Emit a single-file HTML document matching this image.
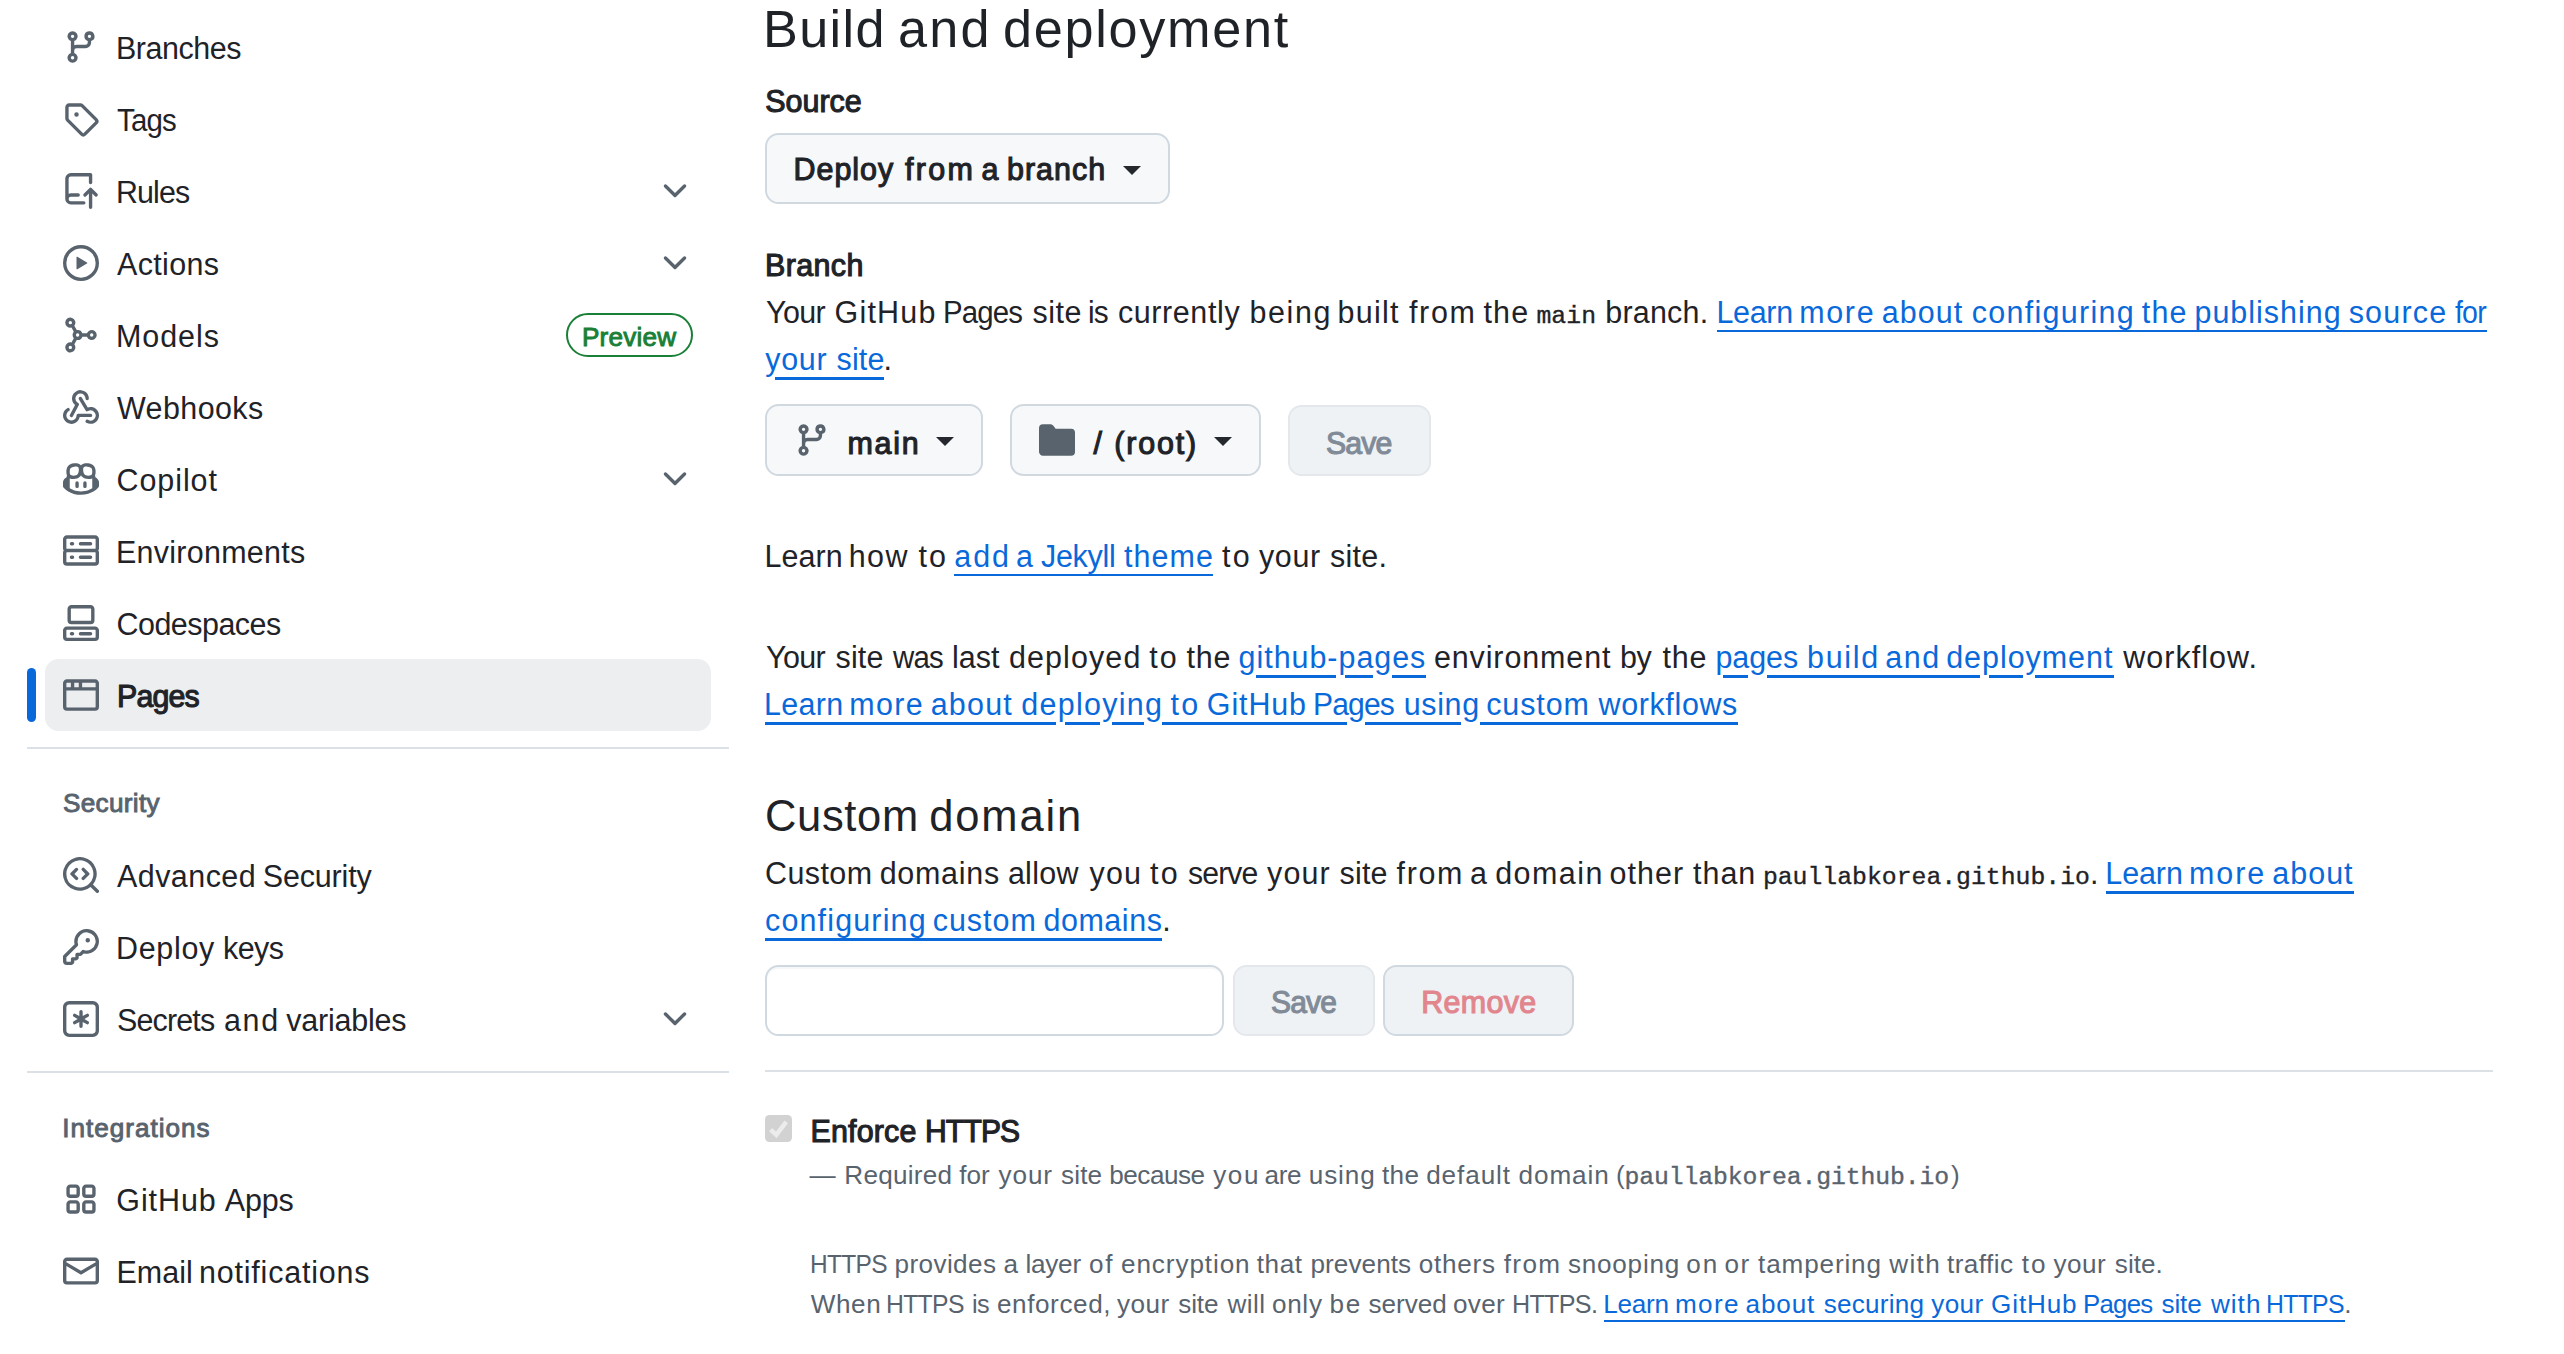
<!DOCTYPE html>
<html lang="en"><head><meta charset="utf-8"><title>GitHub Pages settings</title>
<style>
html,body{margin:0;padding:0;background:#fff}
body{width:2564px;height:1354px;position:relative;overflow:hidden;font-family:"Liberation Sans",sans-serif;color:#1f2328}
.a{position:absolute;display:block}
.t{position:absolute;white-space:pre;line-height:1;transform-origin:0 0;font-family:"Liberation Sans",sans-serif;color:#1f2328}
.m{font-family:"Liberation Mono",monospace}
</style></head><body>
<div class="a" style="left:45px;top:659px;width:666px;height:72px;background:#eceef0;border-radius:13.5px"></div>
<div class="a" style="left:27px;top:668px;width:9px;height:54px;background:#0969da;border-radius:4.5px"></div>
<svg class="a" style="left:63px;top:29px" width="36" height="36" viewBox="0 0 16 16" fill="#59636e"><path d="M9.5 3.25a2.25 2.25 0 1 1 3 2.122V6A2.5 2.5 0 0 1 10 8.5H6a1 1 0 0 0-1 1v1.128a2.251 2.251 0 1 1-1.5 0V5.372a2.25 2.25 0 1 1 1.5 0v1.836A2.493 2.493 0 0 1 6 7h4a1 1 0 0 0 1-1v-.628A2.25 2.25 0 0 1 9.5 3.25Zm-6 0a.75.75 0 1 0 1.5 0 .75.75 0 0 0-1.5 0Zm8.25-.75a.75.75 0 1 0 0 1.5.75.75 0 0 0 0-1.5ZM4.25 12a.75.75 0 1 0 0 1.5.75.75 0 0 0 0-1.5Z"/></svg>
<svg class="a" style="left:63px;top:101px" width="36" height="36" viewBox="0 0 16 16" fill="#59636e"><path d="M1 7.775V2.75C1 1.784 1.784 1 2.75 1h5.025c.464 0 .91.184 1.238.513l6.25 6.25a1.75 1.75 0 0 1 0 2.474l-5.026 5.026a1.75 1.75 0 0 1-2.474 0l-6.25-6.25A1.752 1.752 0 0 1 1 7.775Zm1.5 0c0 .066.026.13.073.177l6.25 6.25a.25.25 0 0 0 .354 0l5.025-5.025a.25.25 0 0 0 0-.354l-6.25-6.25a.25.25 0 0 0-.177-.073H2.75a.25.25 0 0 0-.25.25ZM6 5a1 1 0 1 1 0 2 1 1 0 0 1 0-2Z"/></svg>
<svg class="a" style="left:63px;top:173px" width="36" height="36" viewBox="0 0 16 16" fill="#59636e"><path d="M1 2.5A2.5 2.5 0 0 1 3.5 0h8.75a.75.75 0 0 1 .75.75v3.5a.75.75 0 0 1-1.5 0V1.5h-8a1 1 0 0 0-1 1v6.708A2.493 2.493 0 0 1 3.5 9h3.25a.75.75 0 0 1 0 1.5H3.5a1 1 0 0 0 0 2h5.75a.75.75 0 0 1 0 1.5H3.5A2.5 2.5 0 0 1 1 11.5Zm13.23 7.79h-.001l-1.224-1.224v6.184a.75.75 0 0 1-1.5 0V9.066L10.28 10.29a.75.75 0 0 1-1.06-1.061l2.505-2.504a.75.75 0 0 1 1.06 0L15.29 9.23a.751.751 0 0 1-.018 1.042.751.751 0 0 1-1.042.018Z"/></svg>
<svg class="a" style="left:657px;top:173px" width="36" height="36" viewBox="0 0 16 16" fill="#59636e"><path d="M12.78 5.22a.749.749 0 0 1 0 1.06l-4.25 4.25a.749.749 0 0 1-1.06 0L3.22 6.28a.749.749 0 1 1 1.06-1.06L8 8.939l3.72-3.719a.749.749 0 0 1 1.06 0Z"/></svg>
<svg class="a" style="left:63px;top:245px" width="36" height="36" viewBox="0 0 16 16" fill="#59636e"><path d="M8 0a8 8 0 1 1 0 16A8 8 0 0 1 8 0ZM1.5 8a6.5 6.5 0 1 0 13 0 6.5 6.5 0 0 0-13 0Zm4.879-2.773 4.264 2.559a.25.25 0 0 1 0 .428l-4.264 2.559A.25.25 0 0 1 6 10.559V5.442a.25.25 0 0 1 .379-.215Z"/></svg>
<svg class="a" style="left:657px;top:245px" width="36" height="36" viewBox="0 0 16 16" fill="#59636e"><path d="M12.78 5.22a.749.749 0 0 1 0 1.06l-4.25 4.25a.749.749 0 0 1-1.06 0L3.22 6.28a.749.749 0 1 1 1.06-1.06L8 8.939l3.72-3.719a.749.749 0 0 1 1.06 0Z"/></svg>
<svg class="a" style="left:63px;top:317px" width="36" height="36" viewBox="0 0 16 16" fill="#59636e"><path d="M10.628 7.25a2.25 2.25 0 1 1 0 1.5H8.622a2.25 2.25 0 0 1-2.513 1.466L5.03 12.124a2.25 2.25 0 1 1-1.262-.814l1.035-1.832A2.245 2.245 0 0 1 4.25 8c0-.564.207-1.079.55-1.474L3.766 4.69a2.25 2.25 0 1 1 1.264-.813L6.11 5.786A2.25 2.25 0 0 1 8.622 7.25ZM12.75 8.75a.75.75 0 1 0 0-1.5.75.75 0 0 0 0 1.5ZM6.5 8.75a.75.75 0 1 0 0-1.5.75.75 0 0 0 0 1.5ZM3.25 12.75a.75.75 0 1 0 0 1.5.75.75 0 0 0 0-1.5ZM3.25 1.75a.75.75 0 1 0 0 1.5.75.75 0 0 0 0-1.5Z"/></svg>
<svg class="a" style="left:63px;top:389px" width="36" height="36" viewBox="0 0 16 16" fill="#59636e"><path d="M5.5 4.25a2.25 2.25 0 0 1 4.5 0 .75.75 0 0 0 1.5 0 3.75 3.75 0 1 0-6.14 2.889l-2.272 4.258a.75.75 0 0 0 1.324.706L7 7.25a.75.75 0 0 0-.309-1.015A2.25 2.25 0 0 1 5.5 4.25Z M7.364 3.607a.75.75 0 0 1 1.03.257l2.608 4.349a3.75 3.75 0 1 1-.628 6.785.75.75 0 0 1 .752-1.299 2.25 2.25 0 1 0-.033-3.88.75.75 0 0 1-1.03-.256L7.107 4.636a.75.75 0 0 1 .257-1.03Z M2.9 8.776A.75.75 0 0 1 2.625 9.8 2.25 2.25 0 1 0 6 11.75a.75.75 0 0 1 .75-.751h5.5a.75.75 0 0 1 0 1.5H7.425a3.751 3.751 0 1 1-5.55-3.998.75.75 0 0 1 1.024.274Z"/></svg>
<svg class="a" style="left:63px;top:461px" width="36" height="36" viewBox="0 0 16 16" fill="#59636e"><path d="M7.998 15.035c-4.562 0-7.873-2.914-7.998-3.749V9.338c.085-.628.677-1.686 1.588-2.065.013-.07.024-.143.036-.218.029-.183.06-.384.126-.612-.201-.508-.254-1.084-.254-1.656 0-.87.128-1.769.693-2.484.579-.733 1.494-1.124 2.724-1.261 1.206-.134 2.262.034 2.944.765.05.053.096.108.139.165.044-.057.094-.112.143-.165.682-.731 1.738-.899 2.944-.765 1.23.137 2.145.528 2.724 1.261.566.715.693 1.614.693 2.484 0 .572-.053 1.148-.254 1.656.066.228.098.429.126.612.012.076.024.148.037.218.924.385 1.522 1.471 1.591 2.095v1.872c0 .766-3.351 3.795-8.002 3.795Zm0-1.485c2.28 0 4.584-1.11 5.002-1.433V7.862l-.023-.116c-.49.21-1.075.291-1.727.291-1.146 0-2.059-.327-2.71-.991A3.222 3.222 0 0 1 8 6.303a3.24 3.24 0 0 1-.544.743c-.65.664-1.563.991-2.71.991-.652 0-1.236-.081-1.727-.291l-.023.116v4.255c.419.323 2.722 1.433 5.002 1.433ZM6.762 2.83c-.193-.206-.637-.413-1.682-.297-1.019.113-1.479.404-1.713.7-.247.312-.369.789-.369 1.554 0 .793.129 1.171.308 1.371.162.181.519.379 1.442.379.853 0 1.339-.235 1.638-.54.315-.322.527-.827.617-1.553.117-.935-.037-1.395-.241-1.614Zm4.155-.297c-1.044-.116-1.488.091-1.681.297-.204.219-.359.679-.242 1.614.091.726.303 1.231.618 1.553.299.305.784.54 1.638.54.922 0 1.28-.198 1.442-.379.179-.2.308-.578.308-1.371 0-.765-.123-1.242-.37-1.554-.233-.296-.693-.587-1.713-.7Z M6.25 9.037a.75.75 0 0 1 .75.75v1.501a.75.75 0 0 1-1.5 0V9.787a.75.75 0 0 1 .75-.75Zm4.25.75v1.501a.75.75 0 0 1-1.5 0V9.787a.75.75 0 0 1 1.5 0Z"/></svg>
<svg class="a" style="left:657px;top:461px" width="36" height="36" viewBox="0 0 16 16" fill="#59636e"><path d="M12.78 5.22a.749.749 0 0 1 0 1.06l-4.25 4.25a.749.749 0 0 1-1.06 0L3.22 6.28a.749.749 0 1 1 1.06-1.06L8 8.939l3.72-3.719a.749.749 0 0 1 1.06 0Z"/></svg>
<svg class="a" style="left:63px;top:533px" width="36" height="36" viewBox="0 0 16 16" fill="#59636e"><path d="M1.75 1h12.5c.966 0 1.75.784 1.75 1.75v4c0 .372-.116.717-.314 1 .198.283.314.628.314 1v4a1.75 1.75 0 0 1-1.75 1.75H1.75A1.75 1.75 0 0 1 0 12.75v-4c0-.358.109-.707.314-1a1.739 1.739 0 0 1-.314-1v-4C0 1.784.784 1 1.75 1ZM1.5 2.75v4c0 .138.112.25.25.25h12.5a.25.25 0 0 0 .25-.25v-4a.25.25 0 0 0-.25-.25H1.75a.25.25 0 0 0-.25.25Zm.25 5.75a.25.25 0 0 0-.25.25v4c0 .138.112.25.25.25h12.5a.25.25 0 0 0 .25-.25v-4a.25.25 0 0 0-.25-.25ZM7 4.75A.75.75 0 0 1 7.75 4h4.5a.75.75 0 0 1 0 1.5h-4.5A.75.75 0 0 1 7 4.75ZM7.75 10h4.5a.75.75 0 0 1 0 1.5h-4.5a.75.75 0 0 1 0-1.5ZM3 4.75A.75.75 0 0 1 3.75 4h.5a.75.75 0 0 1 0 1.5h-.5A.75.75 0 0 1 3 4.75ZM3.75 10h.5a.75.75 0 0 1 0 1.5h-.5a.75.75 0 0 1 0-1.5Z"/></svg>
<svg class="a" style="left:63px;top:605px" width="36" height="36" viewBox="0 0 16 16" fill="#59636e"><path d="M0 11.25c0-.966.784-1.75 1.75-1.75h12.5c.966 0 1.75.784 1.75 1.75v3A1.75 1.75 0 0 1 14.25 16H1.75A1.75 1.75 0 0 1 0 14.25Zm2-9.5C2 .784 2.784 0 3.75 0h8.5C13.216 0 14 .784 14 1.75v5a1.75 1.75 0 0 1-1.75 1.75h-8.5A1.75 1.75 0 0 1 2 6.75Zm1.75-.25a.25.25 0 0 0-.25.25v5c0 .138.112.25.25.25h8.5a.25.25 0 0 0 .25-.25v-5a.25.25 0 0 0-.25-.25Zm-2 9.5a.25.25 0 0 0-.25.25v3c0 .138.112.25.25.25h12.5a.25.25 0 0 0 .25-.25v-3a.25.25 0 0 0-.25-.25Z M7 12.75a.75.75 0 0 1 .75-.75h4.5a.75.75 0 0 1 0 1.5h-4.5a.75.75 0 0 1-.75-.75Zm-4 0a.75.75 0 0 1 .75-.75h.5a.75.75 0 0 1 0 1.5h-.5a.75.75 0 0 1-.75-.75Z"/></svg>
<svg class="a" style="left:63px;top:677px" width="36" height="36" viewBox="0 0 16 16" fill="#59636e"><path d="M0 2.75C0 1.784.784 1 1.75 1h12.5c.966 0 1.75.784 1.75 1.75v10.5A1.75 1.75 0 0 1 14.25 15H1.75A1.75 1.75 0 0 1 0 13.25ZM14.5 6h-13v7.25c0 .138.112.25.25.25h12.5a.25.25 0 0 0 .25-.25Zm-6-3.5v2h6V2.75a.25.25 0 0 0-.25-.25ZM5 2.5v2h2v-2Zm-3.25 0a.25.25 0 0 0-.25.25V4.5h2v-2Z"/></svg>
<div class="a" style="left:566px;top:313px;width:127px;height:44px;border:2.25px solid #1a7f37;border-radius:23px;box-sizing:border-box"></div>
<div class="a" style="left:27px;top:747px;width:702px;height:2.25px;background:#dce1e7"></div>
<div class="a" style="left:27px;top:1071px;width:702px;height:2.25px;background:#dce1e7"></div>
<svg class="a" style="left:63px;top:857px" width="36" height="36" viewBox="0 0 16 16" fill="#59636e"><path d="M8.47 4.97a.75.75 0 0 0 0 1.06L9.94 7.5 8.47 8.97a.75.75 0 1 0 1.06 1.06l2-2a.75.75 0 0 0 0-1.06l-2-2a.75.75 0 0 0-1.06 0ZM6.53 6.03a.75.75 0 0 0-1.06-1.06l-2 2a.75.75 0 0 0 0 1.06l2 2a.75.75 0 1 0 1.06-1.06L5.06 7.5l1.47-1.47Z M12.246 13.307a7.501 7.501 0 1 1 1.06-1.06l2.474 2.473a.749.749 0 0 1-.326 1.275.749.749 0 0 1-.734-.215ZM1.5 7.5a6.002 6.002 0 0 0 3.608 5.504 6.002 6.002 0 0 0 6.486-1.117.748.748 0 0 1 .292-.293A6 6 0 1 0 1.5 7.5Z"/></svg>
<svg class="a" style="left:63px;top:929px" width="36" height="36" viewBox="0 0 16 16" fill="#59636e"><path d="M10.5 0a5.499 5.499 0 1 1-1.288 10.848l-.932.932a.749.749 0 0 1-.53.22H7v.75a.749.749 0 0 1-.22.53l-.5.5a.749.749 0 0 1-.53.22H5v.75a.749.749 0 0 1-.22.53l-.5.5a.749.749 0 0 1-.53.22h-2A1.75 1.75 0 0 1 0 14.25v-2c0-.199.079-.389.22-.53l4.932-4.932A5.5 5.5 0 0 1 10.5 0Zm-4 5.5c-.001.431.069.86.205 1.269a.75.75 0 0 1-.181.768L1.5 12.56v1.69c0 .138.112.25.25.25h1.69l.06-.06v-1.19a.75.75 0 0 1 .75-.75h1.19l.06-.06v-1.19a.75.75 0 0 1 .75-.75h1.19l1.023-1.025a.75.75 0 0 1 .768-.18A4 4 0 1 0 6.5 5.5ZM11 6a1 1 0 1 1 0-2 1 1 0 0 1 0 2Z"/></svg>
<svg class="a" style="left:63px;top:1001px" width="36" height="36" viewBox="0 0 16 16" fill="#59636e"><path d="M0 2.75A2.75 2.75 0 0 1 2.75 0h10.5A2.75 2.75 0 0 1 16 2.75v10.5A2.75 2.75 0 0 1 13.25 16H2.75A2.75 2.75 0 0 1 0 13.25ZM2.75 1.5c-.69 0-1.25.56-1.25 1.25v10.5c0 .69.56 1.25 1.25 1.25h10.5c.69 0 1.25-.56 1.25-1.25V2.75c0-.69-.56-1.25-1.25-1.25Z M8 4a.75.75 0 0 1 .75.75V6.7l1.69-.975a.75.75 0 0 1 .75 1.3L9.5 8l1.69.976a.75.75 0 0 1-.75 1.298L8.75 9.3v1.951a.75.75 0 0 1-1.5 0V9.299l-1.69.976a.75.75 0 0 1-.75-1.3L6.5 8l-1.69-.975a.75.75 0 0 1 .75-1.3l1.69.976V4.75A.75.75 0 0 1 8 4Z"/></svg>
<svg class="a" style="left:657px;top:1001px" width="36" height="36" viewBox="0 0 16 16" fill="#59636e"><path d="M12.78 5.22a.749.749 0 0 1 0 1.06l-4.25 4.25a.749.749 0 0 1-1.06 0L3.22 6.28a.749.749 0 1 1 1.06-1.06L8 8.939l3.72-3.719a.749.749 0 0 1 1.06 0Z"/></svg>
<svg class="a" style="left:63px;top:1181px" width="36" height="36" viewBox="0 0 16 16" fill="#59636e"><path d="M1.5 3.25c0-.966.784-1.75 1.75-1.75h2.5c.966 0 1.75.784 1.75 1.75v2.5A1.75 1.75 0 0 1 5.75 7.5h-2.5A1.75 1.75 0 0 1 1.5 5.75Zm7 0c0-.966.784-1.75 1.75-1.75h2.5c.966 0 1.750.784 1.750 1.75v2.5a1.75 1.75 0 0 1-1.75 1.75h-2.5A1.75 1.75 0 0 1 8.5 5.75Zm-7 7c0-.966.784-1.75 1.75-1.75h2.5c.966 0 1.75.784 1.75 1.75v2.5a1.75 1.75 0 0 1-1.75 1.75h-2.5a1.75 1.75 0 0 1-1.75-1.75Zm7 0c0-.966.784-1.75 1.75-1.75h2.5c.966 0 1.75.784 1.75 1.75v2.5a1.75 1.75 0 0 1-1.75 1.75h-2.5a1.75 1.75 0 0 1-1.75-1.75ZM3.25 3a.25.25 0 0 0-.25.25v2.5c0 .138.112.25.25.25h2.5A.25.25 0 0 0 6 5.75v-2.5A.25.25 0 0 0 5.750 3Zm7 0a.25.25 0 0 0-.25.25v2.5c0 .138.112.25.25.25h2.5a.25.25 0 0 0 .25-.25v-2.5a.25.25 0 0 0-.25-.25Zm-7 7a.25.25 0 0 0-.25.25v2.5c0 .138.112.25.25.25h2.5a.25.25 0 0 0 .25-.25v-2.5a.25.25 0 0 0-.25-.25Zm7 0a.25.25 0 0 0-.25.25v2.5c0 .138.112.25.25.25h2.5a.25.25 0 0 0 .25-.25v-2.5a.25.25 0 0 0-.25-.25Z"/></svg>
<svg class="a" style="left:63px;top:1253px" width="36" height="36" viewBox="0 0 16 16" fill="#59636e"><path d="M1.75 2h12.5c.966 0 1.75.784 1.75 1.75v8.5A1.75 1.75 0 0 1 14.25 14H1.75A1.75 1.75 0 0 1 0 12.25v-8.5C0 2.784.784 2 1.75 2ZM1.5 12.251c0 .138.112.25.25.25h12.5a.25.25 0 0 0 .25-.25V5.809L8.38 9.397a.75.75 0 0 1-.76 0L1.5 5.809v6.442Zm13-8.181v-.32a.25.25 0 0 0-.25-.25H1.75a.25.25 0 0 0-.25.25v.32L8 7.88Z"/></svg>
<div class="a" style="left:765px;top:132.5px;width:404.5px;height:71.5px;background:#f6f8fa;border:2.25px solid #d1d9e0;border-radius:13.5px;box-sizing:border-box"></div>
<div class="a" style="left:1122.5px;top:165.75px;width:0;height:0;border-left:9px solid transparent;border-right:9px solid transparent;border-top:9px solid #25292e"></div>
<div class="a" style="left:765px;top:404px;width:218px;height:72px;background:#f6f8fa;border:2.25px solid #d1d9e0;border-radius:13.5px;box-sizing:border-box"></div>
<svg class="a" style="left:794px;top:421.5px" width="36" height="36" viewBox="0 0 16 16" fill="#59636e"><path d="M9.5 3.25a2.25 2.25 0 1 1 3 2.122V6A2.5 2.5 0 0 1 10 8.5H6a1 1 0 0 0-1 1v1.128a2.251 2.251 0 1 1-1.5 0V5.372a2.25 2.25 0 1 1 1.5 0v1.836A2.493 2.493 0 0 1 6 7h4a1 1 0 0 0 1-1v-.628A2.25 2.25 0 0 1 9.5 3.25Zm-6 0a.75.75 0 1 0 1.5 0 .75.75 0 0 0-1.5 0Zm8.25-.75a.75.75 0 1 0 0 1.5.75.75 0 0 0 0-1.5ZM4.25 12a.75.75 0 1 0 0 1.5.75.75 0 0 0 0-1.5Z"/></svg>
<div class="a" style="left:936px;top:437.4px;width:0;height:0;border-left:9px solid transparent;border-right:9px solid transparent;border-top:9px solid #25292e"></div>
<div class="a" style="left:1010.3px;top:404px;width:250.4px;height:72px;background:#f6f8fa;border:2.25px solid #d1d9e0;border-radius:13.5px;box-sizing:border-box"></div>
<svg class="a" style="left:1038.8px;top:421.5px" width="36" height="36" viewBox="0 0 16 16" fill="#59636e"><path d="M1.75 1A1.75 1.75 0 0 0 0 2.75v10.5C0 14.216.784 15 1.75 15h12.5A1.75 1.75 0 0 0 16 13.25v-8.5A1.75 1.75 0 0 0 14.25 3H7.5a.25.25 0 0 1-.2-.1l-.9-1.2C6.07 1.26 5.55 1 5 1H1.75Z"/></svg>
<div class="a" style="left:1214px;top:437.4px;width:0;height:0;border-left:9px solid transparent;border-right:9px solid transparent;border-top:9px solid #25292e"></div>
<div class="a" style="left:1288px;top:404.5px;width:142.8px;height:71.5px;background:#eff2f5;border:2.25px solid #e4e8ec;border-radius:13.5px;box-sizing:border-box"></div>
<div class="a" style="left:765px;top:964.7px;width:458.7px;height:71px;background:#fff;border:2.25px solid #d1d9e0;border-radius:13.5px;box-sizing:border-box;box-shadow:inset 0 2px 0 rgba(208,215,222,.2)"></div>
<div class="a" style="left:1233.2px;top:964.7px;width:141.4px;height:71px;background:#eff2f5;border:2.25px solid #e4e8ec;border-radius:13.5px;box-sizing:border-box"></div>
<div class="a" style="left:1383px;top:964.7px;width:190.7px;height:71px;background:#eff2f5;border:2.25px solid #d1d9e0;border-radius:13.5px;box-sizing:border-box"></div>
<div class="a" style="left:765px;top:1070px;width:1728px;height:2.25px;background:#dce1e7"></div>
<svg class="a" style="left:765px;top:1115px" width="27" height="27" viewBox="0 0 27 27"><rect width="27" height="27" rx="4.5" fill="#d2d2d2"/><path d="M5.6 14.6 L11.3 19.9 L21.2 6.8" stroke="#ececec" stroke-width="4.4" fill="none"/></svg>
<div class="a" style="left:1717.20px;top:329.70px;width:770.30px;height:2.8px;background:#0969da"></div>
<div class="a" style="left:775.22px;top:376.95px;width:108.98px;height:2.8px;background:#0969da"></div>
<div class="a" style="left:954.10px;top:573.70px;width:258.70px;height:2.8px;background:#0969da"></div>
<div class="a" style="left:1722.50px;top:675.20px;width:25.45px;height:2.8px;background:#0969da"></div>
<div class="a" style="left:1766.55px;top:675.20px;width:213.46px;height:2.8px;background:#0969da"></div>
<div class="a" style="left:1989.01px;top:675.20px;width:34.25px;height:2.8px;background:#0969da"></div>
<div class="a" style="left:2035.48px;top:675.20px;width:78.22px;height:2.8px;background:#0969da"></div>
<div class="a" style="left:764.80px;top:721.80px;width:290.91px;height:2.8px;background:#0969da"></div>
<div class="a" style="left:1064.71px;top:721.80px;width:35.15px;height:2.8px;background:#0969da"></div>
<div class="a" style="left:1112.08px;top:721.80px;width:31.52px;height:2.8px;background:#0969da"></div>
<div class="a" style="left:1162.20px;top:721.80px;width:184.67px;height:2.8px;background:#0969da"></div>
<div class="a" style="left:1365.28px;top:721.80px;width:95.62px;height:2.8px;background:#0969da"></div>
<div class="a" style="left:1479.50px;top:721.80px;width:258.40px;height:2.8px;background:#0969da"></div>
<div class="a" style="left:2106.10px;top:891.20px;width:247.80px;height:2.8px;background:#0969da"></div>
<div class="a" style="left:764.80px;top:937.80px;width:397.70px;height:2.8px;background:#0969da"></div>
<div class="a" style="left:1604.00px;top:1320.20px;width:740.60px;height:2.0px;background:#0969da"></div>
<div class="a" style="left:1255.90px;top:675.20px;width:80.58px;height:2.8px;background:#0969da"></div>
<div class="a" style="left:1345.48px;top:675.20px;width:27.51px;height:2.8px;background:#0969da"></div>
<div class="a" style="left:1391.59px;top:675.20px;width:34.31px;height:2.8px;background:#0969da"></div>
<span class="t" style="left:116.00px;top:32.97px;font-size:30.46px;letter-spacing:-0.454px;">Branches</span>
<span class="t" style="left:117.00px;top:104.97px;font-size:30.46px;letter-spacing:-0.853px;transform:scaleX(0.9668);">Tags</span>
<span class="t" style="left:116.01px;top:176.97px;font-size:30.46px;letter-spacing:-0.853px;transform:scaleX(0.9970);">Rules</span>
<span class="t" style="left:117.00px;top:248.97px;font-size:30.46px;letter-spacing:0.352px;">Actions</span>
<span class="t" style="left:116.00px;top:320.97px;font-size:30.46px;letter-spacing:0.961px;">Models</span>
<span class="t" style="left:117.00px;top:392.97px;font-size:30.46px;letter-spacing:0.414px;">Webhooks</span>
<span class="t" style="left:116.50px;top:464.97px;font-size:30.46px;letter-spacing:0.944px;">Copilot</span>
<span class="t" style="left:116.00px;top:536.97px;font-size:30.46px;letter-spacing:0.277px;">Environments</span>
<span class="t" style="left:116.50px;top:608.97px;font-size:30.46px;letter-spacing:-0.507px;">Codespaces</span>
<span class="t" style="left:116.56px;top:680.97px;font-size:30.46px;letter-spacing:-0.853px;-webkit-text-stroke:1.10px #1f2328;transform:scaleX(0.9962);">Pages</span>
<span class="t" style="left:581.97px;top:323.90px;font-size:26.11px;letter-spacing:0.225px;color:#1a7f37;-webkit-text-stroke:0.94px #1a7f37;">Preview</span>
<span class="t" style="left:62.97px;top:790.10px;font-size:26.11px;letter-spacing:0.328px;color:#59636e;-webkit-text-stroke:0.94px #59636e;">Security</span>
<span class="t" style="left:62.22px;top:1114.70px;font-size:26.11px;letter-spacing:0.993px;color:#59636e;-webkit-text-stroke:0.94px #59636e;">Integrations</span>
<span class="t" style="left:117.00px;top:860.97px;font-size:30.46px;letter-spacing:0.463px;">Advanced</span>
<span class="t" style="left:262.75px;top:860.97px;font-size:30.46px;letter-spacing:-0.147px;">Security</span>
<span class="t" style="left:116.00px;top:932.97px;font-size:30.46px;letter-spacing:0.686px;">Deploy</span>
<span class="t" style="left:223.00px;top:932.97px;font-size:30.46px;letter-spacing:-0.547px;">keys</span>
<span class="t" style="left:117.00px;top:1004.97px;font-size:30.46px;letter-spacing:-0.836px;">Secrets</span>
<span class="t" style="left:224.00px;top:1004.97px;font-size:30.46px;letter-spacing:1.688px;">and</span>
<span class="t" style="left:286.25px;top:1004.97px;font-size:30.46px;letter-spacing:-0.206px;">variables</span>
<span class="t" style="left:116.30px;top:1184.97px;font-size:30.46px;letter-spacing:0.931px;">GitHub</span>
<span class="t" style="left:224.80px;top:1184.97px;font-size:30.46px;letter-spacing:-0.128px;">Apps</span>
<span class="t" style="left:116.40px;top:1256.97px;font-size:30.46px;letter-spacing:0.055px;">Email</span>
<span class="t" style="left:199.00px;top:1256.97px;font-size:30.46px;letter-spacing:0.801px;">notifications</span>
<span class="t" style="left:763.00px;top:3.30px;font-size:52.22px;letter-spacing:1.332px;">Build</span>
<span class="t" style="left:898.00px;top:3.30px;font-size:52.22px;letter-spacing:2.158px;">and</span>
<span class="t" style="left:1003.00px;top:3.30px;font-size:52.22px;letter-spacing:1.699px;">deployment</span>
<span class="t" style="left:765.35px;top:86.22px;font-size:30.46px;letter-spacing:-0.041px;-webkit-text-stroke:1.10px #1f2328;">Source</span>
<span class="t" style="left:793.55px;top:153.72px;font-size:30.46px;letter-spacing:0.966px;-webkit-text-stroke:1.10px #1f2328;">Deploy</span>
<span class="t" style="left:905.05px;top:153.72px;font-size:30.46px;letter-spacing:2.284px;-webkit-text-stroke:1.10px #1f2328;">from</span>
<span class="t" style="left:981.55px;top:153.72px;font-size:30.46px;-webkit-text-stroke:1.10px #1f2328;">a</span>
<span class="t" style="left:1007.05px;top:153.72px;font-size:30.46px;letter-spacing:0.995px;-webkit-text-stroke:1.10px #1f2328;">branch</span>
<span class="t" style="left:765.05px;top:249.72px;font-size:30.46px;letter-spacing:0.369px;-webkit-text-stroke:1.10px #1f2328;">Branch</span>
<span class="t" style="left:766.00px;top:296.72px;font-size:30.46px;letter-spacing:-0.630px;">Your</span>
<span class="t" style="left:834.50px;top:296.72px;font-size:30.46px;letter-spacing:1.231px;">GitHub</span>
<span class="t" style="left:942.57px;top:296.72px;font-size:30.46px;letter-spacing:-0.853px;transform:scaleX(0.9652);">Pages</span>
<span class="t" style="left:1032.40px;top:296.72px;font-size:30.46px;letter-spacing:0.516px;">site</span>
<span class="t" style="left:1088.44px;top:296.72px;font-size:30.46px;letter-spacing:-0.853px;transform:scaleX(0.9782);">is</span>
<span class="t" style="left:1117.90px;top:296.72px;font-size:30.46px;letter-spacing:0.619px;">currently</span>
<span class="t" style="left:1249.40px;top:296.72px;font-size:30.46px;letter-spacing:1.656px;">being</span>
<span class="t" style="left:1337.60px;top:296.72px;font-size:30.46px;letter-spacing:1.249px;">built</span>
<span class="t" style="left:1409.00px;top:296.72px;font-size:30.46px;letter-spacing:1.654px;">from</span>
<span class="t" style="left:1483.50px;top:296.72px;font-size:30.46px;letter-spacing:1.151px;">the</span>
<span class="t m" style="left:1536.38px;top:303.50px;font-size:24.79px;letter-spacing:0.112px;-webkit-text-stroke:0.35px #1f2328;">main</span>
<span class="t" style="left:1605.25px;top:296.72px;font-size:30.46px;letter-spacing:0.231px;">branch.</span>
<span class="t" style="left:1716.40px;top:296.72px;font-size:30.46px;letter-spacing:-0.288px;color:#0969da;">Learn</span>
<span class="t" style="left:1799.20px;top:296.72px;font-size:30.46px;letter-spacing:1.685px;color:#0969da;">more</span>
<span class="t" style="left:1881.70px;top:296.72px;font-size:30.46px;letter-spacing:1.063px;color:#0969da;">about</span>
<span class="t" style="left:1971.70px;top:296.72px;font-size:30.46px;letter-spacing:1.306px;color:#0969da;">configuring</span>
<span class="t" style="left:2141.80px;top:296.72px;font-size:30.46px;letter-spacing:1.151px;color:#0969da;">the</span>
<span class="t" style="left:2194.50px;top:296.72px;font-size:30.46px;letter-spacing:0.999px;color:#0969da;">publishing</span>
<span class="t" style="left:2348.70px;top:296.72px;font-size:30.46px;letter-spacing:1.207px;color:#0969da;">source</span>
<span class="t" style="left:2455.20px;top:296.72px;font-size:30.46px;letter-spacing:-0.853px;color:#0969da;transform:scaleX(0.9349);">for</span>
<span class="t" style="left:765.30px;top:343.97px;font-size:30.46px;letter-spacing:0.700px;color:#0969da;">your</span>
<span class="t" style="left:836.50px;top:343.97px;font-size:30.46px;letter-spacing:0.149px;color:#0969da;">site</span>
<span class="t" style="left:883.50px;top:343.97px;font-size:30.46px;">.</span>
<span class="t" style="left:847.55px;top:427.52px;font-size:30.46px;letter-spacing:1.710px;-webkit-text-stroke:1.10px #1f2328;">main</span>
<span class="t" style="left:1093.55px;top:427.52px;font-size:30.46px;letter-spacing:1.852px;-webkit-text-stroke:1.10px #1f2328;">/ (root)</span>
<span class="t" style="left:1326.46px;top:427.52px;font-size:30.46px;letter-spacing:-0.853px;color:#818b98;-webkit-text-stroke:1.10px #818b98;transform:scaleX(0.9936);">Save</span>
<span class="t" style="left:764.50px;top:540.72px;font-size:30.46px;letter-spacing:0.087px;">Learn</span>
<span class="t" style="left:848.80px;top:540.72px;font-size:30.46px;letter-spacing:1.363px;">how</span>
<span class="t" style="left:918.40px;top:540.72px;font-size:30.46px;letter-spacing:2.139px;">to</span>
<span class="t" style="left:954.30px;top:540.72px;font-size:30.46px;letter-spacing:1.913px;color:#0969da;">add</span>
<span class="t" style="left:1016.00px;top:540.72px;font-size:30.46px;color:#0969da;">a</span>
<span class="t" style="left:1041.00px;top:540.72px;font-size:30.46px;letter-spacing:-0.276px;color:#0969da;">Jekyll</span>
<span class="t" style="left:1124.00px;top:540.72px;font-size:30.46px;letter-spacing:1.075px;color:#0969da;">theme</span>
<span class="t" style="left:1222.08px;top:540.72px;font-size:30.46px;letter-spacing:2.284px;">to</span>
<span class="t" style="left:1258.90px;top:540.72px;font-size:30.46px;letter-spacing:0.667px;">your</span>
<span class="t" style="left:1330.00px;top:540.72px;font-size:30.46px;letter-spacing:0.253px;">site.</span>
<span class="t" style="left:766.00px;top:642.22px;font-size:30.46px;letter-spacing:-0.630px;">Your</span>
<span class="t" style="left:835.50px;top:642.22px;font-size:30.46px;letter-spacing:0.182px;">site</span>
<span class="t" style="left:893.47px;top:642.22px;font-size:30.46px;letter-spacing:-0.853px;transform:scaleX(0.9657);">was</span>
<span class="t" style="left:951.90px;top:642.22px;font-size:30.46px;letter-spacing:0.024px;">last</span>
<span class="t" style="left:1008.90px;top:642.22px;font-size:30.46px;letter-spacing:1.118px;">deployed</span>
<span class="t" style="left:1149.13px;top:642.22px;font-size:30.46px;letter-spacing:2.284px;">to</span>
<span class="t" style="left:1186.60px;top:642.22px;font-size:30.46px;letter-spacing:0.801px;">the</span>
<span class="t" style="left:1238.60px;top:642.22px;font-size:30.46px;letter-spacing:0.967px;color:#0969da;">github-pages</span>
<span class="t" style="left:1433.90px;top:642.22px;font-size:30.46px;letter-spacing:0.898px;">environment</span>
<span class="t" style="left:1620.00px;top:642.22px;font-size:30.46px;letter-spacing:-0.537px;">by</span>
<span class="t" style="left:1662.40px;top:642.22px;font-size:30.46px;letter-spacing:0.901px;">the</span>
<span class="t" style="left:1715.50px;top:642.22px;font-size:30.46px;letter-spacing:-0.062px;color:#0969da;">pages</span>
<span class="t" style="left:1807.00px;top:642.22px;font-size:30.46px;letter-spacing:1.724px;color:#0969da;">build</span>
<span class="t" style="left:1885.30px;top:642.22px;font-size:30.46px;letter-spacing:1.513px;color:#0969da;">and</span>
<span class="t" style="left:1946.20px;top:642.22px;font-size:30.46px;letter-spacing:0.969px;color:#0969da;">deployment</span>
<span class="t" style="left:2123.20px;top:642.22px;font-size:30.46px;letter-spacing:1.066px;">workflow.</span>
<span class="t" style="left:764.00px;top:688.82px;font-size:30.46px;letter-spacing:0.312px;color:#0969da;">Learn</span>
<span class="t" style="left:849.20px;top:688.82px;font-size:30.46px;letter-spacing:1.352px;color:#0969da;">more</span>
<span class="t" style="left:930.70px;top:688.82px;font-size:30.46px;letter-spacing:1.213px;color:#0969da;">about</span>
<span class="t" style="left:1021.30px;top:688.82px;font-size:30.46px;letter-spacing:1.270px;color:#0969da;">deploying</span>
<span class="t" style="left:1170.48px;top:688.82px;font-size:30.46px;letter-spacing:2.284px;color:#0969da;">to</span>
<span class="t" style="left:1206.80px;top:688.82px;font-size:30.46px;letter-spacing:0.891px;color:#0969da;">GitHub</span>
<span class="t" style="left:1313.13px;top:688.82px;font-size:30.46px;letter-spacing:-0.853px;color:#0969da;transform:scaleX(0.9862);">Pages</span>
<span class="t" style="left:1403.70px;top:688.82px;font-size:30.46px;letter-spacing:0.659px;color:#0969da;">using</span>
<span class="t" style="left:1486.20px;top:688.82px;font-size:30.46px;letter-spacing:0.903px;color:#0969da;">custom</span>
<span class="t" style="left:1598.50px;top:688.82px;font-size:30.46px;letter-spacing:0.644px;color:#0969da;">workflows</span>
<span class="t" style="left:765.00px;top:794.76px;font-size:43.52px;letter-spacing:0.648px;">Custom</span>
<span class="t" style="left:929.20px;top:794.76px;font-size:43.52px;letter-spacing:1.856px;">domain</span>
<span class="t" style="left:765.00px;top:858.22px;font-size:30.46px;letter-spacing:0.429px;">Custom</span>
<span class="t" style="left:879.70px;top:858.22px;font-size:30.46px;letter-spacing:0.720px;">domains</span>
<span class="t" style="left:1007.90px;top:858.22px;font-size:30.46px;letter-spacing:0.274px;">allow</span>
<span class="t" style="left:1089.40px;top:858.22px;font-size:30.46px;letter-spacing:1.268px;">you</span>
<span class="t" style="left:1150.03px;top:858.22px;font-size:30.46px;letter-spacing:2.284px;">to</span>
<span class="t" style="left:1187.70px;top:858.22px;font-size:30.46px;letter-spacing:-0.853px;transform:scaleX(0.9897);">serve</span>
<span class="t" style="left:1267.10px;top:858.22px;font-size:30.46px;letter-spacing:1.133px;">your</span>
<span class="t" style="left:1339.60px;top:858.22px;font-size:30.46px;letter-spacing:0.182px;">site</span>
<span class="t" style="left:1396.60px;top:858.22px;font-size:30.46px;letter-spacing:1.654px;">from</span>
<span class="t" style="left:1470.10px;top:858.22px;font-size:30.46px;">a</span>
<span class="t" style="left:1495.20px;top:858.22px;font-size:30.46px;letter-spacing:1.451px;">domain</span>
<span class="t" style="left:1609.40px;top:858.22px;font-size:30.46px;letter-spacing:1.082px;">other</span>
<span class="t" style="left:1693.00px;top:858.22px;font-size:30.46px;letter-spacing:0.989px;">than</span>
<span class="t m" style="left:1762.88px;top:865.00px;font-size:24.79px;letter-spacing:-0.007px;-webkit-text-stroke:0.35px #1f2328;">paullabkorea.github.io</span>
<span class="t" style="left:2090.00px;top:858.22px;font-size:30.46px;">.</span>
<span class="t" style="left:2105.30px;top:858.22px;font-size:30.46px;letter-spacing:-0.088px;color:#0969da;">Learn</span>
<span class="t" style="left:2188.90px;top:858.22px;font-size:30.46px;letter-spacing:1.985px;color:#0969da;">more</span>
<span class="t" style="left:2272.30px;top:858.22px;font-size:30.46px;letter-spacing:1.013px;color:#0969da;">about</span>
<span class="t" style="left:765.00px;top:904.82px;font-size:30.46px;letter-spacing:1.166px;color:#0969da;">configuring</span>
<span class="t" style="left:932.70px;top:904.82px;font-size:30.46px;letter-spacing:0.983px;color:#0969da;">custom</span>
<span class="t" style="left:1043.40px;top:904.82px;font-size:30.46px;letter-spacing:0.570px;color:#0969da;">domains</span>
<span class="t" style="left:1162.30px;top:904.82px;font-size:30.46px;">.</span>
<span class="t" style="left:1270.57px;top:987.22px;font-size:30.46px;letter-spacing:-0.853px;color:#818b98;-webkit-text-stroke:1.10px #818b98;transform:scaleX(0.9843);">Save</span>
<span class="t" style="left:1421.25px;top:987.22px;font-size:30.46px;letter-spacing:0.288px;color:#e2868e;-webkit-text-stroke:1.10px #e2868e;">Remove</span>
<span class="t" style="left:810.55px;top:1116.02px;font-size:30.46px;letter-spacing:0.148px;-webkit-text-stroke:1.10px #1f2328;">Enforce</span>
<span class="t" style="left:924.58px;top:1116.02px;font-size:30.46px;letter-spacing:-0.853px;-webkit-text-stroke:1.10px #1f2328;transform:scaleX(0.9871);">HTTPS</span>
<span class="t" style="left:809.40px;top:1161.90px;font-size:26.11px;color:#59636e;">—</span>
<span class="t" style="left:844.30px;top:1161.90px;font-size:26.11px;letter-spacing:0.267px;color:#59636e;">Required</span>
<span class="t" style="left:959.30px;top:1161.90px;font-size:26.11px;letter-spacing:-0.087px;color:#59636e;">for</span>
<span class="t" style="left:998.60px;top:1161.90px;font-size:26.11px;letter-spacing:0.868px;color:#59636e;">your</span>
<span class="t" style="left:1061.00px;top:1161.90px;font-size:26.11px;letter-spacing:0.164px;color:#59636e;">site</span>
<span class="t" style="left:1109.30px;top:1161.90px;font-size:26.11px;letter-spacing:-0.499px;color:#59636e;">because</span>
<span class="t" style="left:1213.20px;top:1161.90px;font-size:26.11px;letter-spacing:1.562px;color:#59636e;">you</span>
<span class="t" style="left:1264.60px;top:1161.90px;font-size:26.11px;letter-spacing:-0.358px;color:#59636e;">are</span>
<span class="t" style="left:1308.80px;top:1161.90px;font-size:26.11px;letter-spacing:0.876px;color:#59636e;">using</span>
<span class="t" style="left:1381.90px;top:1161.90px;font-size:26.11px;letter-spacing:0.413px;color:#59636e;">the</span>
<span class="t" style="left:1426.20px;top:1161.90px;font-size:26.11px;letter-spacing:0.910px;color:#59636e;">default</span>
<span class="t" style="left:1518.50px;top:1161.90px;font-size:26.11px;letter-spacing:0.918px;color:#59636e;">domain</span>
<span class="t" style="left:1616.00px;top:1161.90px;font-size:26.11px;color:#59636e;">(</span>
<span class="t m" style="left:1624.58px;top:1165.00px;font-size:24.79px;letter-spacing:-0.121px;color:#59636e;-webkit-text-stroke:0.35px #59636e;">paullabkorea.github.io</span>
<span class="t" style="left:1950.90px;top:1161.90px;font-size:26.11px;color:#59636e;">)</span>
<span class="t" style="left:809.83px;top:1251.40px;font-size:26.11px;letter-spacing:-0.731px;color:#59636e;transform:scaleX(0.9372);">HTTPS</span>
<span class="t" style="left:894.60px;top:1251.40px;font-size:26.11px;letter-spacing:0.381px;color:#59636e;">provides</span>
<span class="t" style="left:1003.60px;top:1251.40px;font-size:26.11px;color:#59636e;">a</span>
<span class="t" style="left:1025.40px;top:1251.40px;font-size:26.11px;letter-spacing:-0.224px;color:#59636e;">layer</span>
<span class="t" style="left:1089.10px;top:1251.40px;font-size:26.11px;letter-spacing:1.679px;color:#59636e;">of</span>
<span class="t" style="left:1121.00px;top:1251.40px;font-size:26.11px;letter-spacing:0.906px;color:#59636e;">encryption</span>
<span class="t" style="left:1256.80px;top:1251.40px;font-size:26.11px;letter-spacing:0.568px;color:#59636e;">that</span>
<span class="t" style="left:1310.50px;top:1251.40px;font-size:26.11px;letter-spacing:0.073px;color:#59636e;">prevents</span>
<span class="t" style="left:1418.80px;top:1251.40px;font-size:26.11px;letter-spacing:0.738px;color:#59636e;">others</span>
<span class="t" style="left:1503.70px;top:1251.40px;font-size:26.11px;letter-spacing:1.377px;color:#59636e;">from</span>
<span class="t" style="left:1568.00px;top:1251.40px;font-size:26.11px;letter-spacing:0.749px;color:#59636e;">snooping</span>
<span class="t" style="left:1686.31px;top:1251.40px;font-size:26.11px;letter-spacing:1.958px;color:#59636e;">on</span>
<span class="t" style="left:1724.40px;top:1251.40px;font-size:26.11px;letter-spacing:1.479px;color:#59636e;">or</span>
<span class="t" style="left:1758.10px;top:1251.40px;font-size:26.11px;letter-spacing:0.852px;color:#59636e;">tampering</span>
<span class="t" style="left:1889.20px;top:1251.40px;font-size:26.11px;letter-spacing:1.363px;color:#59636e;">with</span>
<span class="t" style="left:1946.90px;top:1251.40px;font-size:26.11px;letter-spacing:0.482px;color:#59636e;">traffic</span>
<span class="t" style="left:2021.80px;top:1251.40px;font-size:26.11px;letter-spacing:1.846px;color:#59636e;">to</span>
<span class="t" style="left:2053.60px;top:1251.40px;font-size:26.11px;letter-spacing:0.468px;color:#59636e;">your</span>
<span class="t" style="left:2114.80px;top:1251.40px;font-size:26.11px;letter-spacing:0.042px;color:#59636e;">site.</span>
<span class="t" style="left:810.70px;top:1291.10px;font-size:26.11px;letter-spacing:0.605px;color:#59636e;">When</span>
<span class="t" style="left:886.00px;top:1291.10px;font-size:26.11px;letter-spacing:-0.731px;color:#59636e;transform:scaleX(0.9484);">HTTPS</span>
<span class="t" style="left:971.73px;top:1291.10px;font-size:26.11px;letter-spacing:-0.731px;color:#59636e;transform:scaleX(0.9666);">is</span>
<span class="t" style="left:996.90px;top:1291.10px;font-size:26.11px;letter-spacing:0.599px;color:#59636e;">enforced,</span>
<span class="t" style="left:1117.00px;top:1291.10px;font-size:26.11px;letter-spacing:0.501px;color:#59636e;">your</span>
<span class="t" style="left:1178.30px;top:1291.10px;font-size:26.11px;letter-spacing:-0.170px;color:#59636e;">site</span>
<span class="t" style="left:1227.60px;top:1291.10px;font-size:26.11px;letter-spacing:0.381px;color:#59636e;">will</span>
<span class="t" style="left:1271.90px;top:1291.10px;font-size:26.11px;letter-spacing:0.719px;color:#59636e;">only</span>
<span class="t" style="left:1329.60px;top:1291.10px;font-size:26.11px;letter-spacing:1.679px;color:#59636e;">be</span>
<span class="t" style="left:1368.50px;top:1291.10px;font-size:26.11px;letter-spacing:-0.009px;color:#59636e;">served</span>
<span class="t" style="left:1453.00px;top:1291.10px;font-size:26.11px;letter-spacing:0.335px;color:#59636e;">over</span>
<span class="t" style="left:1511.87px;top:1291.10px;font-size:26.11px;letter-spacing:-0.731px;color:#59636e;transform:scaleX(0.9632);">HTTPS.</span>
<span class="t" style="left:1603.20px;top:1291.10px;font-size:26.11px;letter-spacing:-0.264px;color:#0969da;">Learn</span>
<span class="t" style="left:1675.10px;top:1291.10px;font-size:26.11px;letter-spacing:1.278px;color:#0969da;">more</span>
<span class="t" style="left:1745.60px;top:1291.10px;font-size:26.11px;letter-spacing:0.829px;color:#0969da;">about</span>
<span class="t" style="left:1823.70px;top:1291.10px;font-size:26.11px;letter-spacing:0.248px;color:#0969da;">securing</span>
<span class="t" style="left:1931.30px;top:1291.10px;font-size:26.11px;letter-spacing:0.335px;color:#0969da;">your</span>
<span class="t" style="left:1991.10px;top:1291.10px;font-size:26.11px;letter-spacing:0.852px;color:#0969da;">GitHub</span>
<span class="t" style="left:2082.83px;top:1291.10px;font-size:26.11px;letter-spacing:-0.731px;color:#0969da;transform:scaleX(0.9862);">Pages</span>
<span class="t" style="left:2161.60px;top:1291.10px;font-size:26.11px;letter-spacing:-0.170px;color:#0969da;">site</span>
<span class="t" style="left:2210.90px;top:1291.10px;font-size:26.11px;letter-spacing:1.030px;color:#0969da;">with</span>
<span class="t" style="left:2265.70px;top:1291.10px;font-size:26.11px;letter-spacing:-0.731px;color:#0969da;transform:scaleX(0.9496);">HTTPS</span>
<span class="t" style="left:2344.30px;top:1291.10px;font-size:26.11px;color:#59636e;">.</span>
</body></html>
